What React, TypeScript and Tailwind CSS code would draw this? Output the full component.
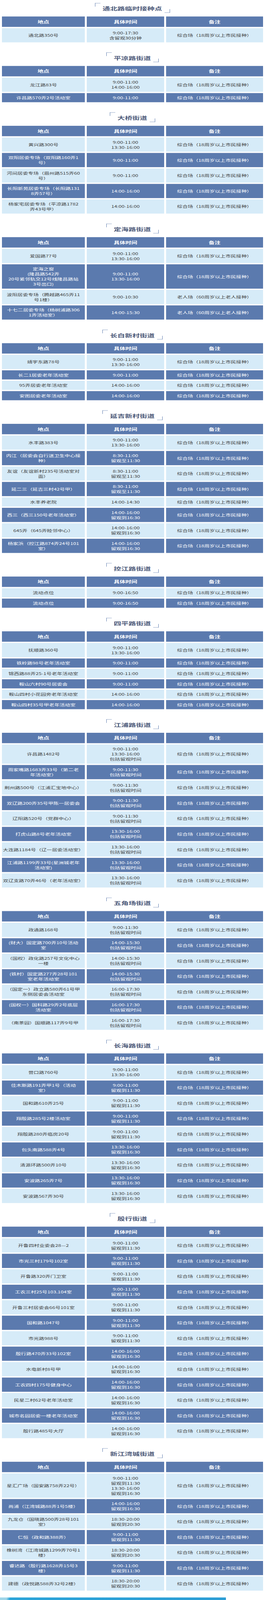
const GENERAL = "综合场（18周岁以上市民接种）";
const ELDER = "老人场（60周岁以上老人接种）";

type Row = { place: string[]; time: string[]; note?: string };
type Section = { title: string; rows: Row[] };

const AM = ["9:00-11:00", "13:30-16:00"];
const AM_OBS = ["9:00-11:00", "留观到11:30"];
const PM_OBS = ["14:00-16:00", "留观到16:30"];
const LATE_OBS = ["13:30-16:00", "留观到16:30"];
const EVE_OBS = ["18:30-20:00", "留观到20:30"];
const KEEP = "包括留观时间";

// row height by the number of text lines (8px padding + 20px per line)
const ROW_H: Record<number, string> = {
  1: "h-[36px]",
  2: "h-[56px]",
  3: "h-[76px]",
  4: "h-[96px]",
};

const sections: Section[] = [
  {
    title: "通北路临时接种点",
    rows: [{ place: ["通北路350号"], time: ["9:00-17:30", "含留观30分钟"] }],
  },
  {
    title: "平凉路街道",
    rows: [
      { place: ["龙江路83号"], time: ["9:00-11:00", "14:00-16:00"] },
      { place: ["许昌路570弄2号活动室"], time: ["9:00-11:00"] },
    ],
  },
  {
    title: "大桥街道",
    rows: [
      { place: ["黄兴路300号"], time: ["9:00-11:00", "13:30-16:00"] },
      { place: ["双阳居委专场（双阳路160弄1", "号）"], time: ["9:00-11:00"] },
      { place: ["河间居委专场（眉州路515弄60", "号）"], time: ["9:00-11:00"] },
      { place: ["长阳新苑居委专场（长阳路131", "8弄57号）"], time: ["14:00-16:00"] },
      { place: ["杨家宅居委专场（平凉路1782", "弄43号甲）"], time: ["14:00-16:00"] },
    ],
  },
  {
    title: "定海路街道",
    rows: [
      { place: ["爱国路77号"], time: AM },
      {
        place: ["定海之窗", "(隆昌路542弄", "20号紧邻轨交12号线隆昌路站", "3号出口)"],
        time: AM,
      },
      { place: ["波阳居委专场（腾越路465弄11", "号1楼）"], time: ["9:00-10:30"], note: ELDER },
      { place: ["十七二居委专场（杨树浦路306", "1弄活动室）"], time: ["14:00-15:30"], note: ELDER },
    ],
  },
  {
    title: "长白新村街道",
    rows: [
      { place: ["靖宇东路78号"], time: AM },
      { place: ["长二1居委老年活动室"], time: ["9:00-11:00"] },
      { place: ["95弄居委老年活动室"], time: ["14:00-16:00"] },
      { place: ["安图居委老年活动室"], time: ["14:00-16:00"] },
    ],
  },
  {
    title: "延吉新村街道",
    rows: [
      { place: ["水丰路383号"], time: AM },
      { place: ["内江（居委会自行送卫生中心接", "种）"], time: ["8:30-11:00", "留观至11:30"] },
      { place: ["友谊（友谊新村235号活动室对", "面）"], time: ["8:30-11:00", "留观至11:30"] },
      { place: ["延二三（延吉三村42号甲）"], time: ["8:30-11:00", "留观至11:30"] },
      { place: ["水丰养老院"], time: ["14:00-14:30"] },
      { place: ["西三（西三150号老年活动室）"], time: PM_OBS },
      { place: ["645弄（645弄睦邻中心）"], time: PM_OBS },
      { place: ["杨家浜（控江路874弄24号101", "室）"], time: PM_OBS },
    ],
  },
  {
    title: "控江路街道",
    rows: [
      { place: ["流动点位"], time: ["9:00-16:50"] },
      { place: ["流动点位"], time: ["9:00-16:50"] },
    ],
  },
  {
    title: "四平路街道",
    rows: [
      { place: ["抚顺路360号"], time: AM },
      { place: ["铁岭路98号老年活动室"], time: ["9:00-11:00"] },
      { place: ["锦西路88弄25-1号老年活动室"], time: ["9:00-11:00"] },
      { place: ["鞍山六村90号居委会"], time: ["9:00-11:00"] },
      { place: ["鞍山四村小花园旁老年活动室"], time: ["14:00-16:00"] },
      { place: ["鞍山四村35号甲老年活动室"], time: ["14:00-16:00"] },
    ],
  },
  {
    title: "江浦路街道",
    rows: [
      { place: ["许昌路1482号"], time: ["9:00-11:00", "13:30-16:00", KEEP] },
      { place: ["周家嘴路1683弄33号（第二老", "年活动室）"], time: ["9:00-11:30", KEEP] },
      { place: ["荆州路500号（江浦汇宝地中心）"], time: ["9:00-11:30", KEEP] },
      { place: ["双辽路200弄35号甲陈一居委会"], time: ["9:00-11:30", KEEP] },
      { place: ["辽阳路520号（党群中心）"], time: ["9:00-11:30", KEEP] },
      { place: ["打虎山路8号老年活动室"], time: ["13:30-16:00", KEEP] },
      { place: ["大连路1184号（辽一居委活动室）"], time: ["13:30-16:00", KEEP] },
      { place: ["江浦路1199弄33号(星洲城老年", "活动室)"], time: ["13:30-16:00", KEEP] },
      { place: ["双辽支路70弄46号（老年活动室）"], time: ["13:30-16:00", KEEP] },
    ],
  },
  {
    title: "五角场街道",
    rows: [
      { place: ["政通路168号"], time: ["9:00-11:30", KEEP] },
      { place: ["(财大）国定路700弄10号活动", "室"], time: ["14:00-15:30", KEEP] },
      { place: ["（国权）政化路257号文化中心", "一楼"], time: ["14:00-15:30", KEEP] },
      { place: ["(铁村）国定路277弄28号101", "室老年活动室"], time: ["14:00-15:30", KEEP] },
      { place: ["（国定一）政立路580弄61号甲", "东侧居委会活动室"], time: ["16:00-17:30", KEEP] },
      { place: ["(国权一）国科路29弄2号底层", "活动室"], time: ["16:00-17:30", KEEP] },
      { place: ["（南茶园）国顺路117弄9号甲"], time: ["16:00-17:30", KEEP] },
    ],
  },
  {
    title: "长海路街道",
    rows: [
      { place: ["营口路760号"], time: AM },
      { place: ["佳木斯路191弄甲1号（活动", "室）"], time: AM_OBS },
      { place: ["国和路610弄25号"], time: AM_OBS },
      { place: ["翔殷路285号2楼活动室"], time: AM_OBS },
      { place: ["翔殷路280弄临房20号"], time: AM_OBS },
      { place: ["包头南路588弄4号"], time: LATE_OBS },
      { place: ["清源环路500弄10号"], time: LATE_OBS },
      { place: ["安波路265弄7号"], time: LATE_OBS },
      { place: ["安波路567弄30号"], time: LATE_OBS },
    ],
  },
  {
    title: "殷行街道",
    rows: [
      { place: ["开鲁四村业委会28—2"], time: AM_OBS },
      { place: ["市光三村179号102室"], time: AM_OBS },
      { place: ["开鲁路320弄门卫室"], time: AM_OBS },
      { place: ["工农三村25号103.104室"], time: AM_OBS },
      { place: ["开鲁三村居委会66号101室"], time: AM_OBS },
      { place: ["国和路1047号"], time: AM_OBS },
      { place: ["市光路988号"], time: AM_OBS },
      { place: ["殷行路470弄33号102室"], time: PM_OBS },
      { place: ["水电新村8号甲"], time: PM_OBS },
      { place: ["工农四村175号健身中心"], time: PM_OBS },
      { place: ["民星二村62号老年活动室"], time: PM_OBS },
      { place: ["城市名园居委一楼老年活动室"], time: PM_OBS },
      { place: ["殷行路485号大厅"], time: PM_OBS },
    ],
  },
  {
    title: "新江湾城街道",
    rows: [
      {
        place: ["星汇广场（国安路758弄22号）"],
        time: ["9:00-11:00", "留观到11:30", "13:30-16:00", "留观到16:30"],
      },
      { place: ["尚浦（江湾城路88弄1号5楼）"], time: PM_OBS },
      { place: ["九龙仓（国晓路500弄28号101", "室）"], time: EVE_OBS },
      { place: ["仁恒（政和路388弄）"], time: AM_OBS },
      { place: ["橡树湾（江湾城路1299弄70号1", "楼）"], time: EVE_OBS },
      { place: ["睿达路（殷行路1628弄15号3", "楼）"], time: AM_OBS },
      { place: ["建德（政悦路588弄32号2楼）"], time: EVE_OBS },
    ],
  },
];

function SectionTitle({ text }: { text: string }) {
  return (
    <div className="mb-[15px] flex justify-center">
      <div className="relative h-[38px] pl-[19px] pr-[20px] pt-[9px]">
        <span className="absolute left-0 top-0 h-[14px] w-[14px] border-l border-t border-[#5a78ab]" />
        <h2 className="text-[19px] font-bold leading-[26px] text-[#4b5878]">{text}</h2>
        <span className="absolute bottom-0 right-0 h-[14px] w-[14px] border-b border-r border-[#5a78ab]" />
      </div>
    </div>
  );
}

function HeadCell({ label }: { label: string }) {
  return (
    <div className="flex h-[41px] items-center justify-center bg-[#5b7aae] text-[15px] font-bold leading-[20px] text-white">
      {label}
    </div>
  );
}

function Cell({ lines, dark, height }: { lines: string[]; dark: boolean; height: string }) {
  const tone = dark ? "bg-[#5b7aae] text-white" : "bg-[#d6ebf8] text-[#3e3e3e]";
  return (
    <div
      className={`flex flex-col items-center justify-center px-[2px] text-center text-[13.6px] leading-[20px] ${tone} ${height}`}
    >
      {lines.map((line, i) => (
        <span key={i} className="block h-[20px] whitespace-nowrap">
          {line}
        </span>
      ))}
    </div>
  );
}

function ScheduleTable({ rows }: { rows: Row[] }) {
  return (
    <div className="mx-[5px] grid grid-cols-[212px_198px_248px] gap-[5px]">
      <HeadCell label="地点" />
      <HeadCell label="具体时间" />
      <HeadCell label="备注" />
      {rows.map((row, i) => {
        const dark = i % 2 === 1;
        const height = ROW_H[Math.max(row.place.length, row.time.length)];
        return [
          <Cell key={`p${i}`} lines={row.place} dark={dark} height={height} />,
          <Cell key={`t${i}`} lines={row.time} dark={dark} height={height} />,
          <Cell key={`n${i}`} lines={[row.note ?? GENERAL]} dark={dark} height={height} />,
        ];
      })}
    </div>
  );
}

export default function App() {
  return (
    <div className="h-[4096px] w-[678px] overflow-hidden bg-white">
      <div className="h-[6308px] w-[678px] origin-top bg-white pt-[12px] font-['Noto_Sans_CJK_SC','Noto_Sans',sans-serif] [transform:scaleY(0.649334)]">
        <div className="flex flex-col gap-10">
          {sections.map((s) => (
            <section key={s.title}>
              <SectionTitle text={s.title} />
              <ScheduleTable rows={s.rows} />
            </section>
          ))}
        </div>
        {/* top edge of the footer picture */}
        <div className="mt-[27px] h-[10px] w-[578px] bg-[linear-gradient(100deg,#9fd5e8_0%,#9fd5e8_3%,#2aa3d8_4.5%,#2b9dd5_100%)]" />
      </div>
    </div>
  );
}
